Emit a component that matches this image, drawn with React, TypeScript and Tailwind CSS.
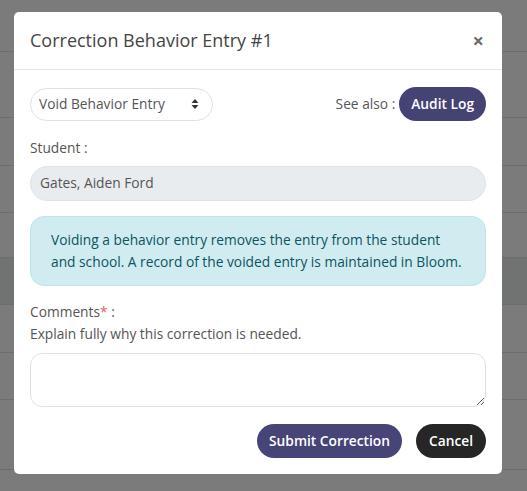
import React from 'react';

const bgRows = [
  { h: 'h-[52px]', bg: 'bg-[#7b7b7b]' },
  { h: 'h-[66px]', bg: 'bg-[#7b7b7b]' },
  { h: 'h-[48px]', bg: 'bg-[#7b7b7b]' },
  { h: 'h-[47px]', bg: 'bg-[#7b7b7b]' },
  { h: 'h-[45px]', bg: 'bg-[#7b7b7b]' },
  { h: 'h-[47px]', bg: 'bg-[#717372]' },
  { h: 'h-[48px]', bg: 'bg-[#7b7b7b]' },
  { h: 'h-[47px]', bg: 'bg-[#7b7b7b]' },
  { h: 'h-[70px]', bg: 'bg-[#7b7b7b]' },
];

function SortArrows() {
  return (
    <svg width="8" height="12" viewBox="0 0 8 12" className="shrink-0">
      <path d="M4 1 L7.5 5 H0.5 Z" fill="#333" />
      <path d="M4 11 L7.5 7 H0.5 Z" fill="#333" />
    </svg>
  );
}

export default function App() {
  return (
    <div
      className="relative w-[527px] h-[491px] overflow-hidden bg-[#7b7b7b]"
      style={{ fontFamily: '"Open Sans", "Noto Sans", sans-serif' }}
    >
      {/* page behind the overlay */}
      <div className="flex flex-col">
        {bgRows.map((r, i) => (
          <div key={i} className={`${r.h} ${r.bg} border-b border-[#6d6d6d]`} />
        ))}
      </div>

      {/* Modal */}
      <div className="absolute left-[14px] top-[12px] w-[488px] h-[462px] bg-white rounded-[5px] flex flex-col">
        <div className="h-[58px] px-4 flex items-center justify-between border-b border-[#e3e6ea]">
          <h2 className="text-[18px] text-[#454545] font-normal">Correction Behavior Entry #1</h2>
          <span className="text-[20px] font-bold text-[#6a6a6a] leading-none mr-[2px]">×</span>
        </div>

        <div className="px-4 pt-[17px] pb-[15px] flex flex-col text-[13.75px] text-[#555]">
          <div className="flex items-center justify-between">
            <div className="w-[183px] h-[33px] rounded-full border border-[#dee2e6] flex items-center justify-between pl-[8px] pr-[13px] text-[#555]">
              <span>Void Behavior Entry</span>
              <SortArrows />
            </div>
            <div className="flex items-center gap-[4px]">
              <span>See also :</span>
              <button className="h-[34px] px-[12px] rounded-full bg-[#454274] text-white font-semibold">
                Audit Log
              </button>
            </div>
          </div>

          <div className="mt-[16px] leading-[21px]">Student :</div>
          <div className="mt-[8px] h-[35px] rounded-full border border-[#dfe3e7] bg-[#e9ecef] flex items-center px-[9px] text-[#555]">
            Gates, Aiden Ford
          </div>

          <div className="mt-[15px] h-[70px] rounded-[14px] border border-[#bee5eb] bg-[#d1ecf1] text-[#0c5460] pl-[20px] pr-[10px] flex items-center leading-[22px]">
            <p className="max-w-[415px]">Voiding a behavior entry removes the entry from the student and school. A record of the voided entry is maintained in Bloom.</p>
          </div>

          <div className="mt-[15px] leading-[22px]">
            Comments<span className="text-[#e4606d]">*</span> :
          </div>
          <div className="leading-[22px]">Explain fully why this correction is needed.</div>
          <textarea className="mt-[8px] h-[54px] w-full rounded-[12px] border border-[#dee2e6] resize-y outline-none px-3 py-1" />

          <div className="mt-[17px] flex justify-end gap-[14px]">
            <button className="h-[34px] px-[12px] rounded-full bg-[#474478] text-white font-semibold">
              Submit Correction
            </button>
            <button className="h-[34px] px-[13px] rounded-full bg-[#262626] text-white font-semibold">
              Cancel
            </button>
          </div>
        </div>
      </div>
    </div>
  );
}
